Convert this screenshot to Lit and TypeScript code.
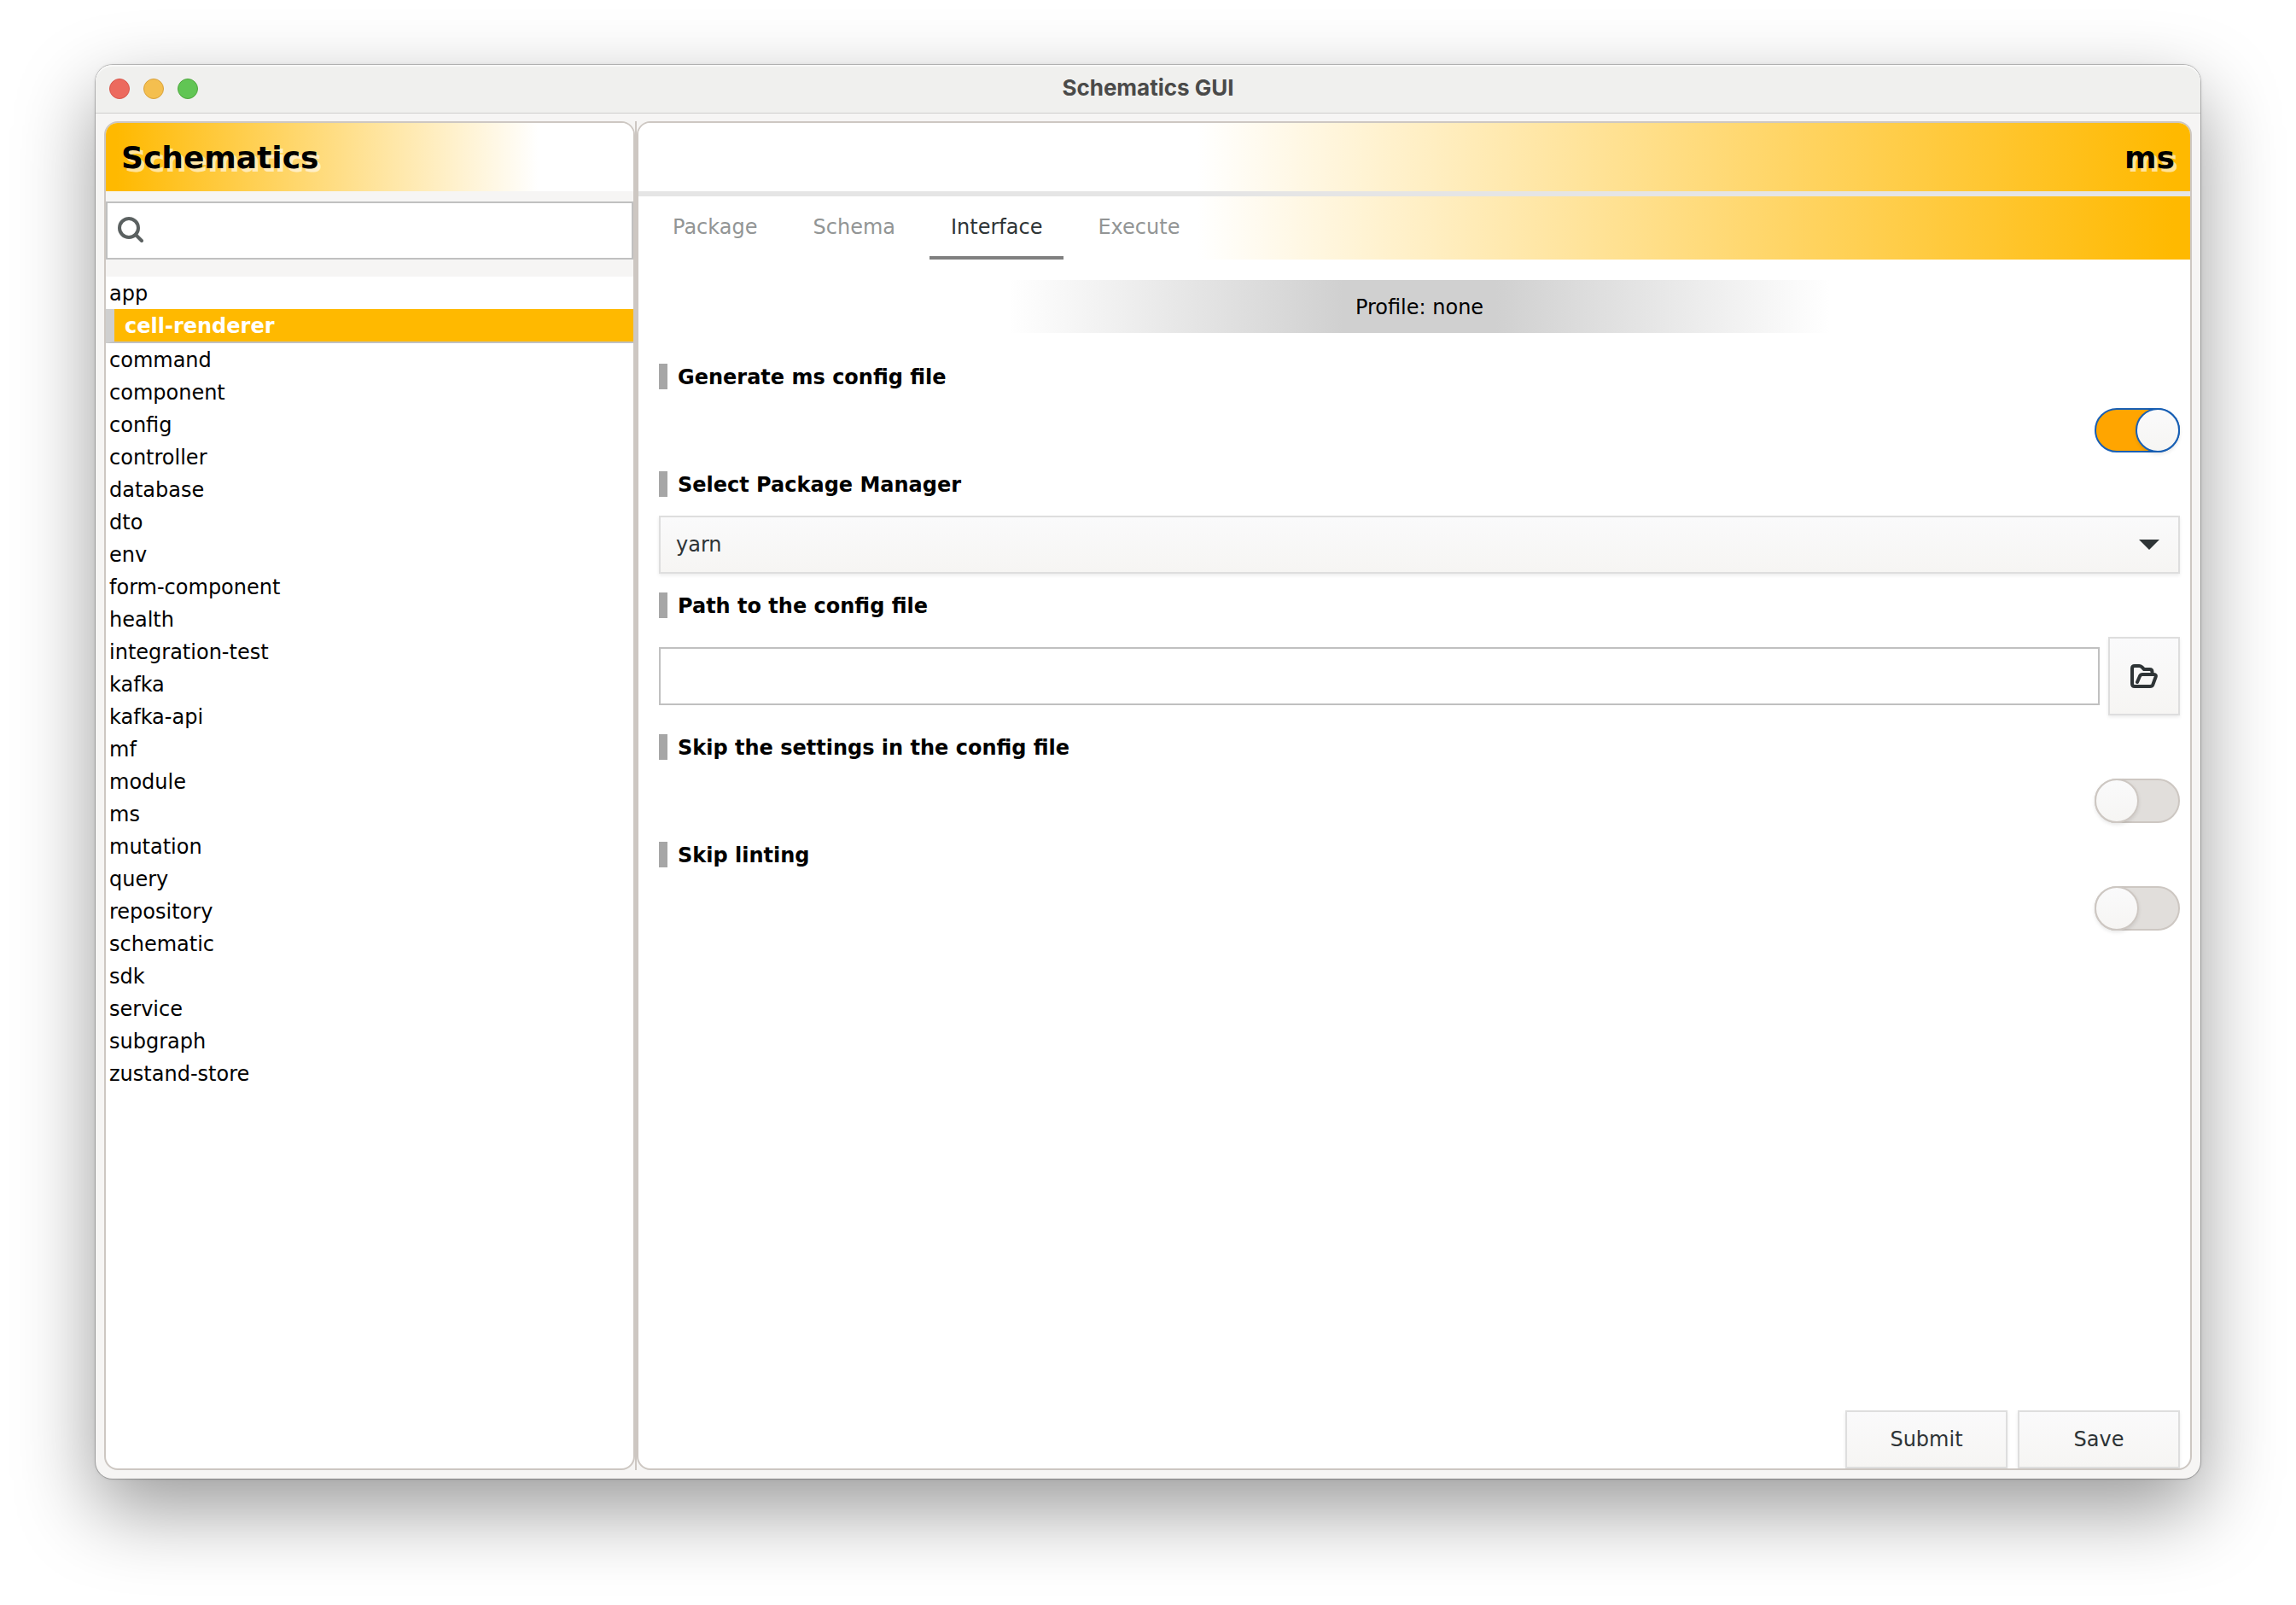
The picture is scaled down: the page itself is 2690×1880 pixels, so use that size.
import { LitElement, html, css, svg } from "lit";
import { customElement, property, state } from "lit/decorators.js";
import { classMap } from "lit/directives/class-map.js";

const SCHEMATICS = [
  "app", "cell-renderer", "command", "component", "config", "controller",
  "database", "dto", "env", "form-component", "health", "integration-test",
  "kafka", "kafka-api", "mf", "module", "ms", "mutation", "query",
  "repository", "schematic", "sdk", "service", "subgraph", "zustand-store",
];

const TABS = ["Package", "Schema", "Interface", "Execute"];

const searchIcon = svg`<svg class="search-icon" viewBox="0 0 30 30" aria-hidden="true">
  <circle cx="13" cy="13" r="11" fill="none" stroke="currentColor" stroke-width="4"/>
  <path d="M21 21l7 7" fill="none" stroke="currentColor" stroke-width="4" stroke-linecap="round"/>
</svg>`;

const folderIcon = svg`<svg class="folder-icon" viewBox="0 0 32 28" aria-hidden="true">
  <path fill="none" stroke="currentColor" stroke-width="4" stroke-linejoin="round" stroke-linecap="round"
    d="M25.500 11V9q0-3-3-3H16l-2.700-2.800Q12 2 10.300 2H5Q2 2 2 5v18q0 3 3 3h18q2.500 0 3.300-2l3.300-9q1-3-2-3H14q-2 0-3 2l-3 7"/>
</svg>`;

@customElement("toggle-switch")
class ToggleSwitch extends LitElement {
  static styles = css`
    :host { display: block; line-height: 0; }
    .switch {
      appearance: none;
      display: inline-flex;
      box-sizing: border-box;
      width: 100px;
      height: 52px;
      margin: 0;
      border: 2px solid #cdc7c2;
      border-radius: 26px;
      background: #e1dedb;
    }
    .switch::before {
      content: "";
      box-sizing: border-box;
      width: 52px;
      height: 52px;
      margin: -2px;
      border: 2px solid #cdc7c2;
      border-radius: 50%;
      background: linear-gradient(#fafafb, #f6f5f3);
      box-shadow: 0 2px 4px rgba(0, 0, 0, 0.1);
    }
    .switch:checked {
      justify-content: flex-end;
      background: #ffa500;
      border-color: #185fb4;
    }
    .switch:checked::before { border-color: #185fb4; }
  `;
  @property() label = "";
  @property({ type: Boolean }) on = false;
  render() {
    return html`<input class="switch" type="checkbox" role="switch" aria-label=${this.label} .checked=${this.on}>`;
  }
}

@customElement("app-root")
class AppRoot extends LitElement {
  static styles = css`
    :host {
      display: block;
      font-family: "DejaVu Sans", Verdana, sans-serif;
      font-size: 24px;
      line-height: 30px;
      color: #000;
    }
    * { box-sizing: border-box; }
    .desktop {
      display: flex;
      min-height: 100vh;
      padding: 76px 112px 148px;
      background: #fff;
      overflow: hidden;
    }
    .window {
      flex: 1;
      display: flex;
      flex-direction: column;
      min-width: 0;
      border-radius: 20px;
      background: #f6f5f4;
      box-shadow: 0 0 0 1px rgba(0, 0, 0, 0.22), 0 0 4px rgba(0, 0, 0, 0.1), 0 36px 92px rgba(0, 0, 0, 0.4);
    }
    .titlebar {
      display: grid;
      grid-template-columns: 1fr auto 1fr;
      align-items: center;
      height: 57px;
      padding: 0 16px;
      border-radius: 20px 20px 0 0;
      border-bottom: 1px solid #cfcfcd;
      background: #f0f0ee;
      box-shadow: inset 0 2px 0 #f8f8f7;
    }
    .lights { display: flex; gap: 16px; }
    .light { width: 24px; height: 24px; border-radius: 50%; border: 1px solid; }
    .close { background: #ec6a5e; border-color: #d9574c; }
    .minimize { background: #f4bf4f; border-color: #d9a23c; }
    .zoom { background: #61c554; border-color: #4fa73e; }
    .title {
      margin: 0;
      padding-bottom: 2px;
      font-family: Inter, "Liberation Sans", sans-serif;
      font-size: 26px;
      font-weight: 700;
      color: #4a4a49;
    }
    .body { flex: 1; display: flex; padding: 9px 10px 10px; }
    .sidebar, .main {
      display: flex;
      flex-direction: column;
      min-width: 0;
      border: 2px solid #cdc7c2;
      border-radius: 16px;
      background: #fff;
      overflow: hidden;
    }
    .sidebar { flex: 0 0 622px; }
    .divider { width: 2px; background: #cdc7c2; }
    .main { flex: 1; }
    .banner {
      display: flex;
      align-items: center;
      height: 80px;
      padding: 2px 18px 0;
    }
    .banner-left { background: linear-gradient(to right, #ffb900 2%, #fff 82%); }
    .banner-right, .tabs { background: linear-gradient(to left, #ffb900 1%, #fff 64%); }
    .banner-right { justify-content: flex-end; }
    .heading {
      margin: 0;
      font-size: 36px;
      line-height: 44px;
      font-weight: 700;
      text-shadow: 4px 4px 0 rgba(255, 255, 255, 0.6);
    }
    .search-area { padding: 12px 0 20px; background: #f6f5f4; }
    .search {
      display: flex;
      align-items: center;
      gap: 12px;
      height: 68px;
      padding: 0 12px 2px;
      border: 2px solid #c0c0c0;
      background: #fff;
      color: #5b6161;
    }
    .search-icon { width: 30px; height: 30px; flex: none; }
    .search-input { flex: 1; height: 100%; border: 0; outline: 0; padding: 0; background: none; font: inherit; }
    .list { margin: 0; padding: 0; list-style: none; }
    .item {
      display: block;
      width: 100%;
      padding: 5px 4px 3px;
      border: 0;
      background: none;
      color: #000;
      font: inherit;
      text-align: left;
    }
    .item.selected {
      padding: 5px 12px 3px;
      border-left: 10px solid #cfcfcf;
      border-bottom: 2px solid #c0c0c0;
      background: #ffb900;
      color: #fff;
      font-weight: 700;
    }
    .tabs {
      display: flex;
      gap: 15px;
      height: 80px;
      padding: 0 15px;
      border-top: 6px solid #e5e5e5;
    }
    .tab {
      padding: 2px 25px 0;
      border: 0;
      border-bottom: 4px solid transparent;
      background: none;
      font: inherit;
      color: #929595;
    }
    .tab.active { color: #2e3436; border-bottom-color: #808080; }
    .content {
      flex: 1;
      display: flex;
      flex-direction: column;
      padding: 24px 12px 0 24px;
    }
    .profile {
      margin: 0 0 36px;
      padding: 17px 0 15px;
      text-align: center;
      background: linear-gradient(to right, #fff 23%, #d0d0d0 45%, #d0d0d0 55%, #fff 77%);
    }
    .form { display: flex; flex-direction: column; gap: 22px; }
    .label {
      padding: 2px 0 0 12px;
      border-left: 10px solid #a6a6a6;
      line-height: 28px;
      font-weight: 700;
    }
    .toggle { align-self: flex-end; }
    .select-wrap { display: grid; align-items: center; }
    .select, .arrow { grid-area: 1 / 1; }
    .select {
      appearance: none;
      height: 68px;
      padding: 0 18px;
    }
    .arrow { justify-self: end; width: 24px; height: 12px; margin-right: 24px; pointer-events: none; z-index: 1; }
    .select, .button {
      border: 2px solid #dedede;
      border-radius: 0;
      background: linear-gradient(#fafafb, #f6f5f3);
      box-shadow: 0 2px 4px rgba(0, 0, 0, 0.08);
      font: inherit;
      color: #2e3436;
    }
    .path-row { display: flex; align-items: center; gap: 10px; }
    .path { flex: 1; min-width: 0; height: 68px; border: 2px solid #c0c0c0; padding: 0 16px; font: inherit; background: #fff; }
    .browse { display: grid; place-items: center; width: 84px; height: 92px; padding: 0; }
    .folder-icon { width: 32px; height: 28px; }
    .actions { display: flex; justify-content: flex-end; gap: 12px; margin-top: auto; }
    .action { width: 190px; height: 68px; padding: 0; }
  `;

  @state() private selected = "cell-renderer";
  @state() private tab = "Interface";

  render() {
    return html`
      <div class="desktop">
        <div class="window">
          <header class="titlebar">
            <div class="lights">
              <span class="light close"></span><span class="light minimize"></span><span class="light zoom"></span>
            </div>
            <h1 class="title">Schematics GUI</h1>
          </header>
          <div class="body">
            <aside class="sidebar">
              <div class="banner banner-left"><h2 class="heading">Schematics</h2></div>
              <div class="search-area">
                <label class="search">${searchIcon}<input class="search-input" type="text" aria-label="Search"></label>
              </div>
              <ul class="list">
                ${SCHEMATICS.map((name) => html`<li>
                  <button class=${classMap({ item: true, selected: name === this.selected })}
                    @click=${() => (this.selected = name)}>${name}</button>
                </li>`)}
              </ul>
            </aside>
            <div class="divider"></div>
            <main class="main">
              <div class="banner banner-right"><h2 class="heading">ms</h2></div>
              <nav class="tabs" role="tablist">
                ${TABS.map((name) => html`<button role="tab" aria-selected=${name === this.tab}
                  class=${classMap({ tab: true, active: name === this.tab })}
                  @click=${() => (this.tab = name)}>${name}</button>`)}
              </nav>
              <div class="content">
                <p class="profile">Profile: none</p>
                <div class="form">
                  <div class="label">Generate ms config file</div>
                  <toggle-switch class="toggle" label="Generate ms config file" on></toggle-switch>
                  <label class="label" for="manager">Select Package Manager</label>
                  <div class="select-wrap">
                    <select class="select" id="manager"><option>yarn</option></select>
                    <svg class="arrow" viewBox="0 0 24 12" aria-hidden="true"><path d="M0 0h24L12 12z" fill="#2e3436"/></svg>
                  </div>
                  <label class="label" for="path">Path to the config file</label>
                  <div class="path-row">
                    <input class="path" id="path" type="text">
                    <button class="button browse" aria-label="Browse">${folderIcon}</button>
                  </div>
                  <div class="label">Skip the settings in the config file</div>
                  <toggle-switch class="toggle" label="Skip the settings in the config file"></toggle-switch>
                  <div class="label">Skip linting</div>
                  <toggle-switch class="toggle" label="Skip linting"></toggle-switch>
                </div>
                <div class="actions">
                  <button class="button action">Submit</button>
                  <button class="button action">Save</button>
                </div>
              </div>
            </main>
          </div>
        </div>
      </div>
    `;
  }
}
